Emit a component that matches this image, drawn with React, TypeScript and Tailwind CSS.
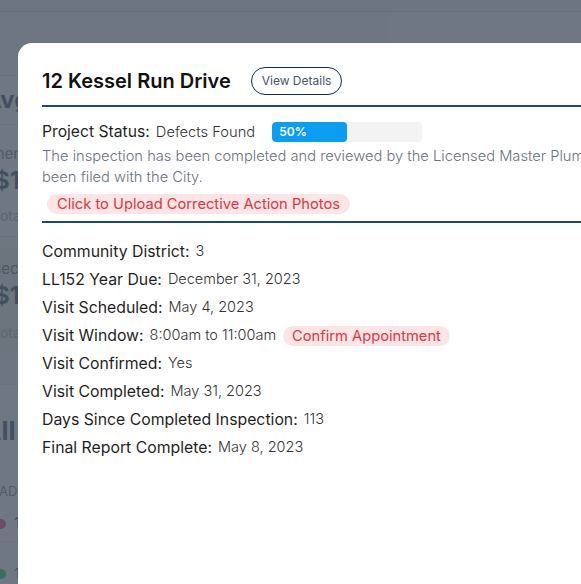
import React from "react";

const rows: { label: string; value: string; pill?: string }[] = [
  { label: "Community District:", value: "3" },
  { label: "LL152 Year Due:", value: "December 31, 2023" },
  { label: "Visit Scheduled:", value: "May 4, 2023" },
  { label: "Visit Window:", value: "8:00am to 11:00am", pill: "Confirm Appointment" },
  { label: "Visit Confirmed:", value: "Yes" },
  { label: "Visit Completed:", value: "May 31, 2023" },
  { label: "Days Since Completed Inspection:", value: "113" },
  { label: "Final Report Complete:", value: "May 8, 2023" },
];

function Background() {
  return (
    <div className="flex h-full flex-col">
      <header className="h-[12px] shrink-0 border-b border-gray-300 bg-gray-100" />
      <main className="-ml-[30px] flex w-[420px] flex-col bg-gray-50 pt-[63px]">
        <section className="h-[162px] border-y border-gray-200 bg-white">
          <h2 className="flex h-[48px] items-center pl-[14px] text-[24px] font-bold leading-none text-[#1e3a5f]">Avg Cost</h2>
          <div className="border-t border-gray-200 pt-[21px]">
            <div className="pl-[2px] text-[15px] leading-none text-gray-500">Owner</div>
            <div className="mt-[8px] pl-[24px] text-[24px] font-bold leading-none text-[#1e3a5f]">$1,250</div>
            <div className="mt-[16px] pl-[22px] text-[14px] leading-none text-gray-400">Total</div>
          </div>
        </section>
        <section className="mt-[10px] h-[103px] bg-[#eef2e4] pt-[14px]">
          <div className="pl-[4px] text-[15px] leading-none text-gray-600">Collected</div>
          <div className="mt-[8px] pl-[24px] text-[24px] font-bold leading-none text-[#1e3a5f]">$19,000</div>
          <div className="mt-[18px] pl-[22px] text-[14px] leading-none text-gray-400">Total</div>
        </section>
        <div className="h-[35px] border-b border-gray-200 bg-gray-100" />
        <section className="h-[240px] bg-white pt-[33px]">
          <h2 className="pl-[12px] text-[26px] font-bold leading-none text-[#1e3a5f]">All Inspections</h2>
          <div className="mt-[41px] pl-[29px] text-[13px] leading-none text-gray-500">ADDRESS</div>
          <div className="mt-[8px] flex h-[36px] items-center gap-[8px] border-b border-gray-200 pl-[26px] text-[15px] text-gray-700">
            <span className="h-[10px] w-[10px] rounded-full bg-rose-500" />12 Kessel Run Drive
          </div>
          <div className="flex h-[64px] items-center gap-[8px] pl-[26px] text-[15px] text-gray-700">
            <span className="h-[10px] w-[10px] rounded-full bg-green-500" />12 Kessel Run Drive
          </div>
        </section>
      </main>
    </div>
  );
}

export default function App() {
  return (
    <div className="relative h-[584px] w-[581px] overflow-hidden bg-white font-['Inter',sans-serif]">
      <Background />
      <div className="absolute inset-0 bg-[#4b5563]/80" />
      <div className="absolute left-[18px] top-[43px] h-[600px] w-[760px] rounded-tl-[14px] bg-white pl-[24px] pt-[24px]">
        <div className="flex items-center">
          <h1 className="text-[20px] font-semibold leading-none text-[#111]">12 Kessel Run Drive</h1>
          <button className="ml-[20px] h-[28px] rounded-full border border-[#0f2d4f] px-[10px] text-[12px] text-[#475569]">
            View Details
          </button>
        </div>
        <div className="mt-[10px] h-[2px] bg-[#1b4a7a]" />
        <div className="mt-[15px] flex h-[20px] items-center">
          <span className="text-[15.7px] text-[#1f1f1f]">Project Status:</span>
          <span className="ml-[6px] text-[14.7px] font-light text-[#333]">Defects Found</span>
          <div className="ml-[17px] h-[20px] w-[150px] overflow-hidden rounded-[4px] bg-[#f3f3f3]">
            <div className="flex h-full w-1/2 items-center rounded-[4px] bg-[#0b9ef0] pl-[7px] text-[12px] font-semibold text-white">
              50%
            </div>
          </div>
        </div>
        <p className="mt-[4px] text-[14.7px] font-light leading-[21px] text-[#6b7280]">
          The inspection has been completed and reviewed by the Licensed Master Plumber and the report has
          <br />
          been filed with the City.
        </p>
        <button className="ml-[5px] mt-[6px] h-[20px] rounded-full bg-[#fde4e5] px-[10px] text-[14.7px] leading-none text-[#d63a45]">
          Click to Upload Corrective Action Photos
        </button>
        <div className="mt-[6px] h-[2px] bg-[#1b4a7a]" />
        <div className="mt-[15px] flex flex-col">
          {rows.map((r) => (
            <div key={r.label} className="flex h-[28px] items-center">
              <span className="text-[15.8px] text-[#1f1f1f]">{r.label}</span>
              <span className="ml-[6px] -translate-y-[1px] text-[14.5px] font-light text-[#333]">{r.value}</span>
              {r.pill && (
                <span className="ml-[7px] flex h-[20px] items-center rounded-full bg-[#fde4e5] px-[9px] text-[14.7px] text-[#d63a45]">
                  {r.pill}
                </span>
              )}
            </div>
          ))}
        </div>
      </div>
    </div>
  );
}
